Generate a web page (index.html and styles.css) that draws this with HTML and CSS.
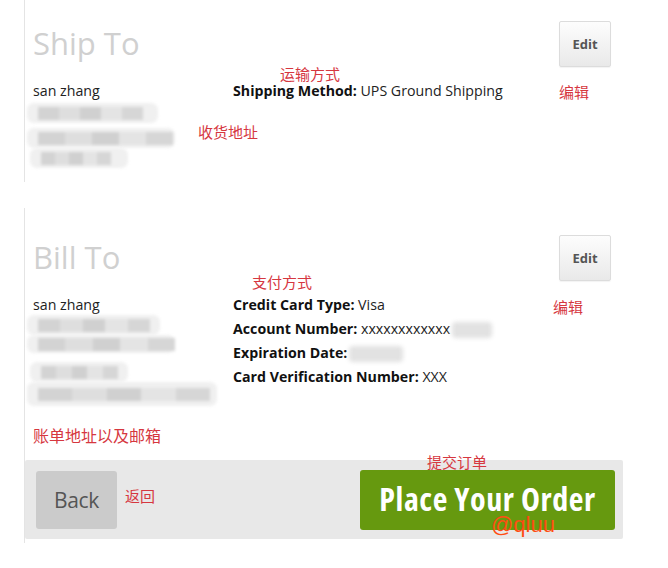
FILE: index.html
```html
<!DOCTYPE html>
<html>
<head>
<meta charset="utf-8">
<link rel="stylesheet" href="styles.css">
</head>
<body>
<div class="page">
  <section class="panel ship">
    <div class="head">
      <h2 class="title">Ship To</h2>
      <button class="edit">Edit</button>
    </div>
    <div class="details">
      <div class="addr">
        <div class="line">san zhang</div>
        <div class="blur w131"><span class="px w105"></span></div>
        <div class="blur w148 mt5"><span class="px w135"></span></div>
        <div class="blur w98 ml3"><span class="px w70"></span></div>
      </div>
      <div class="info">
        <div class="line"><b>Shipping Method:</b> UPS Ground Shipping</div>
      </div>
    </div>
  </section>

  <section class="panel bill">
    <div class="head">
      <h2 class="title">Bill To</h2>
      <button class="edit">Edit</button>
    </div>
    <div class="details">
      <div class="addr">
        <div class="line">san zhang</div>
        <div class="blur w133 h20 top-2"><span class="px w112"></span></div>
        <div class="blur w148 h18"><span class="px w137"></span></div>
        <div class="blur w98 ml3 mt9"><span class="px w77"></span></div>
        <div class="blur w190 h24"><span class="px w172"></span></div>
      </div>
      <div class="info">
        <div class="line"><b>Credit Card Type:</b> Visa</div>
        <div class="line"><b>Account Number:</b> xxxxxxxxxxxx<span class="smudge w40"></span></div>
        <div class="line"><b>Expiration Date:</b><span class="smudge w54"></span></div>
        <div class="line"><b>Card Verification Number:</b> XXX</div>
      </div>
    </div>
    <div class="actions">
      <button class="back">Back</button>
      <button class="place">Place Your Order</button>
    </div>
  </section>

  <span class="note n-ship">运输方式</span>
  <span class="note n-edit1">编辑</span>
  <span class="note n-addr">收货地址</span>
  <span class="note n-pay">支付方式</span>
  <span class="note n-edit2">编辑</span>
  <span class="note n-bill">账单地址以及邮箱</span>
  <span class="note n-submit">提交订单</span>
  <span class="note n-back">返回</span>
  <span class="mark">@qluu</span>
</div>
</body>
</html>
```

FILE: styles.css
```css
* { box-sizing: border-box; }
body {
  margin: 0;
  background: #fff;
  font-family: "Open Sans", "Noto Sans", sans-serif;
  color: #222;
}
.page {
  position: relative;
  width: 668px;
  height: 568px;
  padding-left: 24px;
}
.panel {
  width: 600px;
  border-left: 1px solid #e4e4e4;
  padding-left: 8px;
}
.ship {
  height: 182px;
  padding-top: 21px;
}
.bill {
  margin-top: 26px;
  padding-top: 27px;
  padding-bottom: 4px;
}
.head {
  display: flex;
  justify-content: space-between;
  align-items: flex-start;
  width: 578px;
  height: 46px;
}
.title {
  margin: 0;
  font-size: 31px;
  font-weight: 400;
  line-height: 44px;
  color: #d0d0d0;
}
.edit {
  width: 52px;
  height: 46px;
  padding: 0;
  border: 1px solid #dcdcdc;
  border-radius: 2px;
  background: linear-gradient(#fdfdfd, #e9e9e9);
  box-shadow: 0 1px 1px rgba(0,0,0,0.05);
  font-family: "Open Sans", sans-serif;
  font-weight: 700;
  font-size: 13px;
  color: #555;
}
.details {
  display: flex;
  margin-top: 12px;
}
.addr {
  width: 200px;
}
.info {
  flex: 1;
}
.line {
  font-size: 14.2px;
  line-height: 24px;
  height: 24px;
  white-space: nowrap;
}
.line b { font-weight: 700; color: #111; }
.blur {
  display: flex;
  align-items: center;
  height: 20px;
  margin-left: -6px;
  padding-left: 11px;
  background: #f0f0f0;
  border-radius: 7px;
  filter: blur(1.5px);
}
.px {
  display: block;
  height: 13px;
  background: linear-gradient(90deg, #d3d3d3 0 20%, #dedede 20% 40%, #d0d0d0 40% 60%, #e4e4e4 60% 80%, #d6d6d6 80% 100%);
}
.smudge {
  display: inline-block;
  vertical-align: middle;
  height: 16px;
  margin-left: 2px;
  background: #e2e2e2;
  border-radius: 4px;
  filter: blur(2px);
}
.w40 { width: 40px; }
.w54 { width: 54px; }
.w70 { width: 70px; }
.w77 { width: 77px; }
.w98 { width: 98px; }
.w105 { width: 105px; }
.w112 { width: 112px; }
.w131 { width: 131px; }
.w133 { width: 133px; }
.w135 { width: 135px; }
.w137 { width: 137px; }
.w148 { width: 148px; }
.w172 { width: 172px; }
.w190 { width: 190px; }
.h18 { height: 18px; }
.h20 { height: 20px; }
.h24 { height: 24px; }
.mt5 { margin-top: 5px; }
.mt9 { margin-top: 9px; }
.ml3 { margin-left: -3px; }
.top-2 { margin-top: -2px; }
.actions {
  display: flex;
  justify-content: space-between;
  align-items: center;
  width: 598px;
  height: 79px;
  margin-left: -8px;
  margin-top: 54px;
  padding: 0 8px 0 11px;
  background: #e8e8e8;
  border-radius: 2px;
}
.back {
  width: 81px;
  height: 58px;
  padding: 0;
  border: 0;
  border-radius: 3px;
  background: #cbcbcb;
  font-family: "Open Sans", sans-serif;
  font-size: 21px;
  letter-spacing: -0.3px;
  color: #555;
}
.place {
  width: 255px;
  height: 60px;
  padding: 0 0 2px;
  border: 0;
  border-radius: 3px;
  background: #66990f;
  font-family: "Open Sans", sans-serif;
  font-stretch: condensed;
  font-weight: 700;
  font-size: 32px;
  letter-spacing: 0.6px;
  color: #fff;
}
.note {
  position: absolute;
  font-family: "Noto Sans CJK SC", sans-serif;
  font-size: 15px;
  line-height: 16px;
  color: #d6373f;
  white-space: nowrap;
}
.n-ship { left: 280px; top: 66px; }
.n-edit1 { left: 559px; top: 84px; }
.n-addr { left: 198px; top: 124px; }
.n-pay { left: 252px; top: 274px; }
.n-edit2 { left: 553px; top: 299px; }
.n-bill { left: 33px; top: 427px; font-size: 16px; }
.n-submit { left: 427px; top: 454px; }
.n-back { left: 125px; top: 488px; }
.mark {
  position: absolute;
  left: 491px;
  top: 512px;
  font-family: "Liberation Sans", Arial, sans-serif;
  font-size: 22px;
  line-height: 26px;
  color: #ff4d12;
}
```
